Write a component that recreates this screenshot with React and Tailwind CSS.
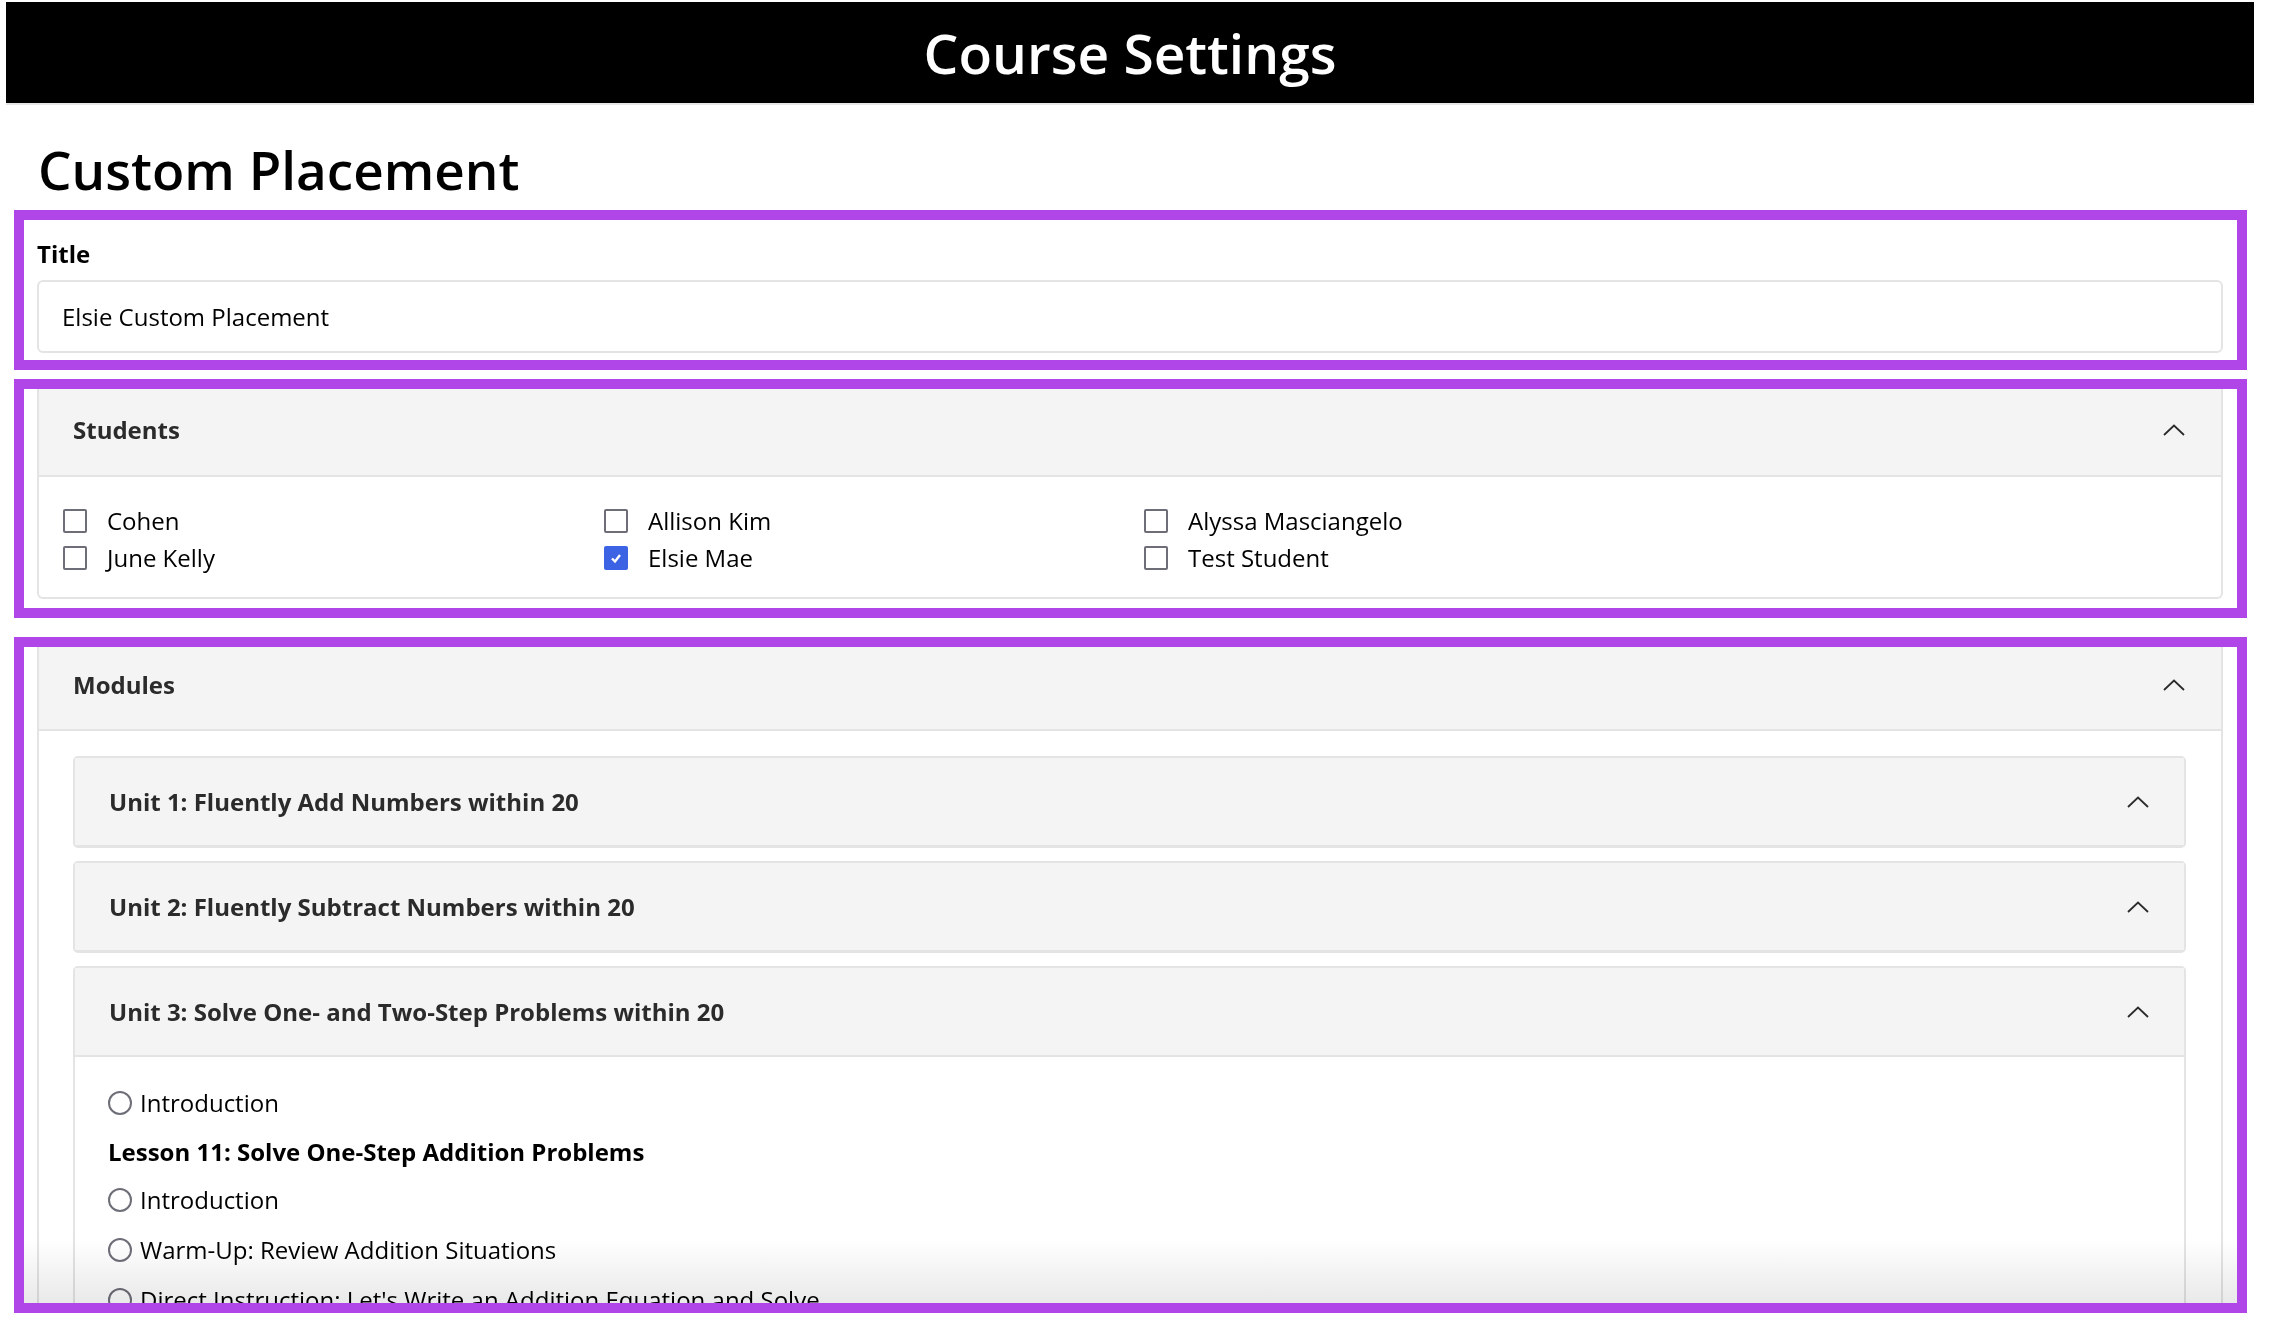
import React from "react";

const students = [
  { name: "Cohen", checked: false },
  { name: "June Kelly", checked: false },
  { name: "Allison Kim", checked: false },
  { name: "Elsie Mae", checked: true },
  { name: "Alyssa Masciangelo", checked: false },
  { name: "Test Student", checked: false },
];

const units = [
  { title: "Unit 1: Fluently Add Numbers within 20", open: false },
  { title: "Unit 2: Fluently Subtract Numbers within 20", open: false },
  { title: "Unit 3: Solve One- and Two-Step Problems within 20", open: true },
];

const Chevron = () => (
  <svg width="22" height="12" viewBox="0 0 22 12" fill="none" stroke="#2b2b2b" strokeWidth="1.8">
    <path d="M1 11 L11 1.5 L21 11" />
  </svg>
);

function Checkbox({ checked }) {
  if (checked) {
    return (
      <span className="w-[24px] h-[24px] bg-[#3b63e3] rounded-[2px] flex items-center justify-center shrink-0">
        <svg width="14" height="14" viewBox="0 0 14 14" fill="none" stroke="white" strokeWidth="2.4">
          <path d="M3 7.5 L6 10.5 L11 4" />
        </svg>
      </span>
    );
  }
  return <span className="w-[24px] h-[24px] border-2 border-[#6d6e78] rounded-[2px] bg-white shrink-0" />;
}

function Radio({ label }) {
  return (
    <div className="h-[50px] flex items-center gap-[8px]">
      <span className="w-[24px] h-[24px] rounded-full border-2 border-[#6d6e78] bg-white shrink-0" />
      <span className="text-[24px] text-black">{label}</span>
    </div>
  );
}

export default function App() {
  return (
    <div className="w-[2282px] h-[1318px] overflow-hidden bg-white font-['Open_Sans',sans-serif]">
      {/* top bar */}
      <header className="ml-[6px] mt-[2px] w-[2248px] h-[103px] bg-black border-b-2 border-[#e6e6e6] flex items-center justify-center">
        <h2 className="text-[55px] leading-none font-semibold text-white">Course Settings</h2>
      </header>

      <h1 className="ml-[38px] mt-[38px] text-[53px] leading-none font-semibold text-black">Custom Placement</h1>

      {/* Title */}
      <section className="ml-[14px] mt-[14px] w-[2233px] border-[10px] border-[#b045e8] pl-[13px] pr-[14px] pt-[18px] pb-[7px]">
        <label className="block text-[24px] leading-[32px] font-bold text-black">Title</label>
        <div className="mt-[10px] h-[73px] border-2 border-[#e4e4e4] rounded-[6px] flex items-center pl-[23px] text-[24px] text-black">
          Elsie Custom Placement
        </div>
      </section>

      {/* Students */}
      <section className="ml-[14px] mt-[9px] w-[2233px] h-[239px] border-[10px] border-[#b045e8] pl-[13px] pr-[14px]">
        <div className="border-2 border-t-0 border-[#e4e4e4] rounded-b-[6px] overflow-hidden">
          <div className="h-[88px] pb-[4px] bg-[#f4f4f4] border-b-2 border-[#e4e4e4] flex items-center justify-between pl-[34px] pr-[36px]">
            <span className="text-[24px] font-bold text-[#2b2b2b]">Students</span>
            <Chevron />
          </div>
          <div className="pl-[24px] pt-[25px] pb-[21px] grid grid-rows-2 grid-flow-col grid-cols-[541px_540px_540px]">
            {students.map((s) => (
              <div key={s.name} className="h-[37px] flex items-center gap-[20px]">
                <Checkbox checked={s.checked} />
                <span className="text-[24px] text-black">{s.name}</span>
              </div>
            ))}
          </div>
        </div>
      </section>

      {/* Modules */}
      <section className="ml-[14px] mt-[19px] w-[2233px] h-[676px] border-[10px] border-[#b045e8] pl-[13px] pr-[14px] overflow-hidden relative">
        <div className="border-2 border-t-0 border-[#e4e4e4] h-[700px]">
          <div className="h-[84px] pb-[6px] bg-[#f4f4f4] border-b-2 border-[#e4e4e4] flex items-center justify-between pl-[34px] pr-[36px]">
            <span className="text-[24px] font-bold text-[#2b2b2b]">Modules</span>
            <Chevron />
          </div>
          <div className="pl-[34px] pr-[35px] pt-[25px] flex flex-col gap-[13px]">
            {units.map((u) => (
              <div
                key={u.title}
                className={`border-2 border-[#e4e4e4] rounded-[5px] ${u.open ? "" : "border-b-[3px] bg-[#f4f4f4]"}`}
              >
                <div
                  className={`flex items-center justify-between pl-[34px] pr-[35px] bg-[#f4f4f4] ${u.open ? "h-[89px] border-b-2 border-[#e4e4e4]" : "h-[87px]"}`}
                >
                  <span className="text-[24px] font-bold text-[#2b2b2b]">{u.title}</span>
                  <Chevron />
                </div>
                {u.open && (
                  <div className="pl-[33px] pt-[21px] bg-white">
                    <Radio label="Introduction" />
                    <div className="h-[47px] flex items-center text-[24px] font-bold text-black">
                      Lesson 11: Solve One-Step Addition Problems
                    </div>
                    <Radio label="Introduction" />
                    <Radio label="Warm-Up: Review Addition Situations" />
                    <Radio label="Direct Instruction: Let's Write an Addition Equation and Solve" />
                  </div>
                )}
              </div>
            ))}
          </div>
        </div>
        {/* bottom fade, multiplied so text stays dark */}
        <div className="absolute left-0 right-0 bottom-0 h-[64px] bg-linear-to-b from-white to-[#e9e9e9] mix-blend-multiply pointer-events-none" />
      </section>
    </div>
  );
}
